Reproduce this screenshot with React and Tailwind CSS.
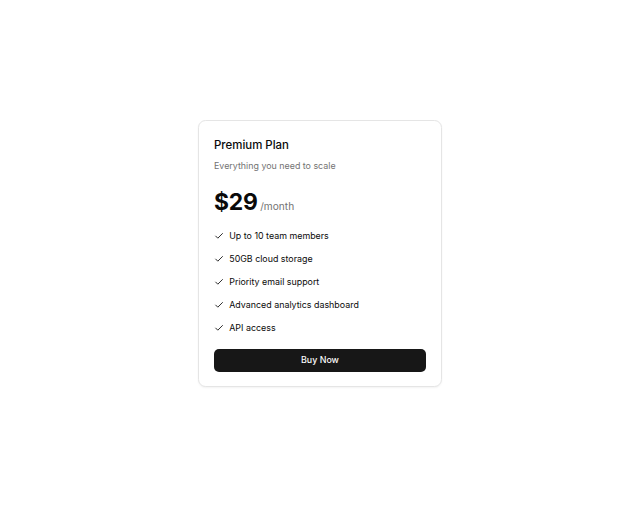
import { Check } from "lucide-react"

const features = [
    "Up to 10 team members",
    "50GB cloud storage",
    "Priority email support",
    "Advanced analytics dashboard",
    "API access",
]

function PricingCard() {
    return (
        <div className="w-[244px] rounded-[7.6px] border border-[#e5e5e5] bg-white px-[15px] pt-[15.5px] pb-[14.5px] shadow-[0_1px_2px_rgba(0,0,0,0.05)] flex flex-col">
            <div className="flex flex-col gap-[5.4px]">
                <h3 className="text-[11.43px] leading-[17.78px] font-medium text-[#0a0a0a]">Premium Plan</h3>
                <p className="text-[8.89px] leading-[12.7px] text-[#737373]">Everything you need to scale</p>
            </div>

            <div className="mt-[17.4px] flex items-baseline gap-[2.54px]">
                <span className="text-[22.86px] leading-[25.4px] font-bold text-[#0a0a0a] tracking-[-0.2px]">$29</span>
                <span className="text-[10.16px] leading-[15.24px] text-[#737373]">/month</span>
            </div>

            <ul className="mt-[15px] flex flex-col gap-[10.16px]">
                {features.map((f) => (
                    <li key={f} className="flex items-center gap-[5.08px] text-[8.89px] leading-[12.7px] text-[#0a0a0a]">
                        <Check className="w-[10.16px] h-[10.16px] shrink-0" strokeWidth={2} />
                        <span>{f}</span>
                    </li>
                ))}
            </ul>

            <button className="mt-[14.2px] h-[23px] w-full rounded-[5px] bg-[#171717] text-[8.89px] font-medium text-[#fafafa]">
                Buy Now
            </button>
        </div>
    )
}

export default function App() {
    return (
        <div className="min-h-[507px] w-full bg-white flex items-center justify-center font-['Inter',sans-serif]">
            <PricingCard />
        </div>
    )
}
